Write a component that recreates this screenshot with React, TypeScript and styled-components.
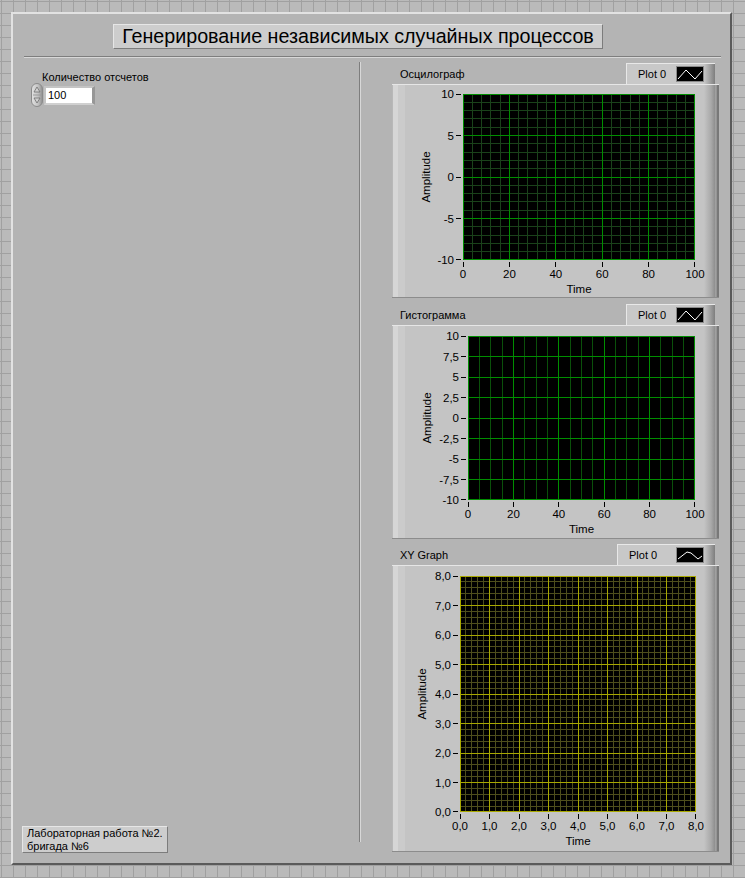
import React from 'react';
import styled, { createGlobalStyle } from 'styled-components';

const GlobalStyle = createGlobalStyle`
  html, body { margin: 0; padding: 0; }
  body {
    width: 745px;
    height: 878px;
    overflow: hidden;
    background-color: #bababa;
    background-image:
      linear-gradient(to right, #a0a0a0 1px, transparent 1px),
      linear-gradient(to bottom, #a0a0a0 1px, transparent 1px);
    background-size: 12px 12px;
    background-position: 1px 1px;
    font-family: "Liberation Sans", Arial, sans-serif;
    color: #000;
  }
`;

const Page = styled.div`
  padding: 12px 0 0 11px;
`;

const Panel = styled.div`
  box-sizing: border-box;
  width: 721px;
  height: 853px;
  background: #b4b4b4;
  border: 2px solid;
  border-color: #e2e2e2 #5a5a5a #5a5a5a #e2e2e2;
  display: flex;
  flex-direction: column;
`;

const TitleRow = styled.div`
  padding: 10px 0 0 100px;
  display: flex;
`;

const Title = styled.div`
  box-sizing: border-box;
  width: 490px;
  height: 25px;
  background: #cdcdcd;
  border: 1px solid;
  border-color: #e6e6e6 #7c7c7c #7c7c7c #e6e6e6;
  font-size: 19.7px;
  line-height: 23px;
  text-align: center;
  white-space: nowrap;
`;

const HGroove = styled.div`
  margin: 7px 0 0 11px;
  width: 697px;
  border-top: 1px solid #7e7e7e;
  border-bottom: 1px solid #d8d8d8;
`;

const Body = styled.div`
  flex: 1;
  display: flex;
  align-items: stretch;
`;

const LeftCol = styled.div`
  box-sizing: border-box;
  width: 346px;
  padding: 13px 0 10px 9px;
  display: flex;
  flex-direction: column;
  justify-content: space-between;
  align-items: flex-start;
`;

const NumericControl = styled.div`
  margin-left: 9px;
  display: flex;
  flex-direction: column;
`;

const NumLabel = styled.div`
  padding-left: 11px;
  font-size: 11px;
  line-height: 13px;
  white-space: nowrap;
`;

const NumRow = styled.div`
  display: flex;
  align-items: center;
  margin-top: -1px;
`;

const NumBox = styled.div`
  box-sizing: border-box;
  margin-left: 1px;
  width: 51px;
  height: 19px;
  background: #fff;
  border: 2px solid #c4c4c4;
  border-right: 3px solid #979797;
  border-bottom-color: #d0d0d0;
  padding-left: 2px;
  font-size: 11px;
  line-height: 15px;
`;

const NoteBox = styled.div`
  box-sizing: border-box;
  width: 146px;
  height: 27px;
  background: #cdcdcd;
  border: 1px solid;
  border-color: #e6e6e6 #7c7c7c #7c7c7c #e6e6e6;
  padding: 0 4px;
  font-size: 11px;
  line-height: 13px;
  white-space: nowrap;
`;

const VGroove = styled.div`
  align-self: flex-start;
  margin-top: 4px;
  height: 780px;
  border-left: 1px solid #7e7e7e;
  border-right: 1px solid #d8d8d8;
`;

const RightCol = styled.div`
  margin-left: 31px;
  padding-top: 5px;
  width: 327px;
  display: flex;
  flex-direction: column;
`;

const GraphBlock = styled.div<{ $gap: number }>`
  margin-top: ${(p) => p.$gap}px;
  display: flex;
  flex-direction: column;
`;

const GraphHeader = styled.div`
  height: 21px;
  display: flex;
  align-items: flex-end;
  justify-content: space-between;
`;

const GraphLabel = styled.div`
  padding-left: 8px;
  margin-bottom: 3px;
  font-size: 11px;
  line-height: 13px;
  white-space: nowrap;
`;

const Legend = styled.div<{ $w: number }>`
  box-sizing: border-box;
  width: ${(p) => p.$w}px;
  height: 21px;
  margin-right: 4px;
  padding: 0 11px 0 11px;
  display: flex;
  align-items: center;
  justify-content: space-between;
  border-top: 1px solid #e8e8e8;
  border-left: 1px solid #e8e8e8;
  background: linear-gradient(
    to right,
    #c8c8c8 0,
    #c8c8c8 calc(100% - 11px),
    #a8a8a8 calc(100% - 6px),
    #7e7e7e 100%
  );
  font-size: 11px;
`;

const Swatch = styled.svg`
  display: block;
  width: 28px;
  height: 16px;
`;

const GraphFrame = styled.div<{ $h: number }>`
  width: 327px;
  height: ${(p) => p.$h}px;
  background: linear-gradient(
    to right,
    #b8b8b8 0,
    #b8b8b8 1px,
    #d6d6d6 1px,
    #d6d6d6 6px,
    #cbcbcb 6px,
    #cbcbcb 13px,
    #c4c4c4 13px,
    #c4c4c4 calc(100% - 15px),
    #a9a9a9 calc(100% - 8px),
    #8e8e8e calc(100% - 4px),
    #b2b2b2 calc(100% - 3px),
    #787878 calc(100% - 2px),
    #787878 100%
  );
  box-shadow: inset 0 1px 0 #e6e6e6, inset 0 -1px 0 #8c8c8c;
`;

const ChartSvg = styled.svg`
  display: block;
  font-family: "Liberation Sans", Arial, sans-serif;
  font-size: 11.5px;
`;

type Axis = {
  min: number;
  max: number;
  major: number;
  minor: number | null;
  fmt: (v: number) => string;
};

type ChartSpec = {
  height: number;
  plot: { x: number; y: number; w: number; h: number };
  xAxis: Axis;
  yAxis: Axis;
  majorColor: string;
  minorColor: string;
  ampX: number;
};

const steps = (a: Axis, step: number) => {
  const n = Math.round((a.max - a.min) / step);
  const out: number[] = [];
  for (let i = 0; i <= n; i++) out.push(a.min + i * step);
  return out;
};

const isOn = (v: number, a: Axis) => {
  const r = (v - a.min) / a.major;
  return Math.abs(r - Math.round(r)) < 1e-6;
};

const Chart: React.FC<{ spec: ChartSpec }> = ({ spec }) => {
  const { plot, xAxis, yAxis } = spec;
  const sx = (v: number) => plot.x + ((v - xAxis.min) / (xAxis.max - xAxis.min)) * plot.w;
  const sy = (v: number) => plot.y + plot.h - ((v - yAxis.min) / (yAxis.max - yAxis.min)) * plot.h;
  const cx = (v: number) => Math.min(Math.floor(sx(v)), plot.x + plot.w - 1) + 0.5;
  const cy = (v: number) => Math.min(Math.floor(sy(v)), plot.y + plot.h - 1) + 0.5;
  const bottom = plot.y + plot.h;

  const xMinor = xAxis.minor ? steps(xAxis, xAxis.minor).filter((v) => !isOn(v, xAxis)) : [];
  const yMinor = yAxis.minor ? steps(yAxis, yAxis.minor).filter((v) => !isOn(v, yAxis)) : [];
  const xMajor = steps(xAxis, xAxis.major);
  const yMajor = steps(yAxis, yAxis.major);

  return (
    <ChartSvg width={327} height={spec.height} viewBox={`0 0 327 ${spec.height}`}>
      <rect x={plot.x} y={plot.y} width={plot.w} height={plot.h} fill="#000" />
      <g shapeRendering="crispEdges" strokeWidth={1}>
        {xMinor.map((v) => (
          <line key={`xm${v}`} x1={cx(v)} x2={cx(v)} y1={plot.y} y2={bottom} stroke={spec.minorColor} />
        ))}
        {yMinor.map((v) => (
          <line key={`ym${v}`} y1={cy(v)} y2={cy(v)} x1={plot.x} x2={plot.x + plot.w} stroke={spec.minorColor} />
        ))}
        {xMajor.map((v) => (
          <line key={`xM${v}`} x1={cx(v)} x2={cx(v)} y1={plot.y} y2={bottom} stroke={spec.majorColor} />
        ))}
        {yMajor.map((v) => (
          <line key={`yM${v}`} y1={cy(v)} y2={cy(v)} x1={plot.x} x2={plot.x + plot.w} stroke={spec.majorColor} />
        ))}
        {yMajor.map((v) => (
          <line key={`yt${v}`} y1={cy(v)} y2={cy(v)} x1={plot.x - 7} x2={plot.x - 2} stroke="#000" />
        ))}
        {xMajor.map((v) => (
          <line key={`xt${v}`} x1={cx(v)} x2={cx(v)} y1={bottom + 2} y2={bottom + 7} stroke="#000" />
        ))}
      </g>
      {yMajor.map((v) => (
        <text key={`yl${v}`} x={plot.x - 9} y={sy(v) + 4} textAnchor="end">
          {yAxis.fmt(v)}
        </text>
      ))}
      {xMajor.map((v) => (
        <text key={`xl${v}`} x={sx(v)} y={bottom + 18} textAnchor="middle">
          {xAxis.fmt(v)}
        </text>
      ))}
      <text x={plot.x + plot.w / 2} y={bottom + 33} textAnchor="middle">
        Time
      </text>
      <text
        x={0}
        y={0}
        textAnchor="middle"
        transform={`translate(${spec.ampX + 4} ${plot.y + plot.h / 2}) rotate(-90)`}
      >
        Amplitude
      </text>
    </ChartSvg>
  );
};

const PlotSwatch: React.FC<{ points: string }> = ({ points }) => (
  <Swatch viewBox="0 0 28 16">
    <rect x="0.5" y="0.5" width="27" height="15" fill="#000" stroke="#8a8a8a" />
    <polyline points={points} fill="none" stroke="#fff" strokeWidth="1" />
  </Swatch>
);

const Spinner: React.FC = () => (
  <svg width="12" height="24" viewBox="0 0 12 24" style={{ display: 'block' }}>
    <defs>
      <linearGradient id="spin" x1="0" x2="1" y1="0" y2="0">
        <stop offset="0" stopColor="#e2e2e2" />
        <stop offset="0.6" stopColor="#c2c2c2" />
        <stop offset="1" stopColor="#8e8e8e" />
      </linearGradient>
    </defs>
    <rect x="0.5" y="0.5" width="11" height="23" rx="5.5" fill="url(#spin)" stroke="#8a8a8a" />
    <line x1="2" x2="10" y1="12" y2="12" stroke="#9a9a9a" />
    <polygon points="3,9 6,4 9,9" fill="#d0d0d0" stroke="#707070" strokeWidth="0.8" />
    <polygon points="3,15 6,20 9,15" fill="#d0d0d0" stroke="#707070" strokeWidth="0.8" />
  </svg>
);

const comma = (d: number) => (v: number) => v.toFixed(d).replace('.', ',');
const plain = (v: number) => String(v).replace('.', ',');

const graph1: ChartSpec = {
  height: 214,
  plot: { x: 71, y: 10, w: 232, h: 166 },
  xAxis: { min: 0, max: 100, major: 20, minor: 4, fmt: plain },
  yAxis: { min: -10, max: 10, major: 5, minor: 1, fmt: plain },
  majorColor: '#008e00',
  minorColor: '#1a421a',
  ampX: 34,
};

const graph2: ChartSpec = {
  height: 214,
  plot: { x: 76, y: 11, w: 227, h: 164 },
  xAxis: { min: 0, max: 100, major: 20, minor: 5, fmt: plain },
  yAxis: { min: -10, max: 10, major: 2.5, minor: null, fmt: plain },
  majorColor: '#008e00',
  minorColor: '#0a500a',
  ampX: 35,
};

const graph3: ChartSpec = {
  height: 287,
  plot: { x: 68, y: 11, w: 236, h: 236 },
  xAxis: { min: 0, max: 8, major: 1, minor: 0.2, fmt: comma(1) },
  yAxis: { min: 0, max: 8, major: 1, minor: 0.2, fmt: comma(1) },
  majorColor: '#a8a800',
  minorColor: '#4e4e1c',
  ampX: 30,
};

type GraphDef = {
  label: string;
  gap: number;
  legendW: number;
  swatch: string;
  spec: ChartSpec;
};

const graphs: GraphDef[] = [
  { label: 'Осцилограф', gap: 0, legendW: 89, swatch: '2,13 10,4 19,13 26,5', spec: graph1 },
  { label: 'Гистограмма', gap: 6, legendW: 89, swatch: '2,13 10,4 19,13 26,5', spec: graph2 },
  { label: 'XY Graph', gap: 5, legendW: 98, swatch: '2,12 11,5 15,6 22,12 26,9', spec: graph3 },
];

export default function App() {
  return (
    <>
      <GlobalStyle />
      <Page>
        <Panel>
          <TitleRow>
            <Title>Генерирование независимых случайных процессов</Title>
          </TitleRow>
          <HGroove />
          <Body>
            <LeftCol>
              <NumericControl>
                <NumLabel>Количество отсчетов</NumLabel>
                <NumRow>
                  <Spinner />
                  <NumBox>100</NumBox>
                </NumRow>
              </NumericControl>
              <NoteBox>
                Лабораторная работа №2.
                <br />
                бригада №6
              </NoteBox>
            </LeftCol>
            <VGroove />
            <RightCol>
              {graphs.map((g) => (
                <GraphBlock key={g.label} $gap={g.gap}>
                  <GraphHeader>
                    <GraphLabel>{g.label}</GraphLabel>
                    <Legend $w={g.legendW}>
                      <span>Plot 0</span>
                      <PlotSwatch points={g.swatch} />
                    </Legend>
                  </GraphHeader>
                  <GraphFrame $h={g.spec.height}>
                    <Chart spec={g.spec} />
                  </GraphFrame>
                </GraphBlock>
              ))}
            </RightCol>
          </Body>
        </Panel>
      </Page>
    </>
  );
}
